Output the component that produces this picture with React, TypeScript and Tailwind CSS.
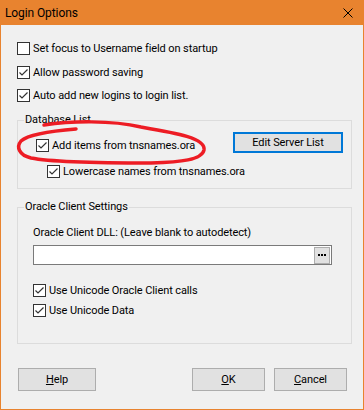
import React from "react";

const font = { fontFamily: 'Roboto, "Noto Sans", "Liberation Sans", sans-serif' };

function Check({ checked }: { checked: boolean }) {
  return (
    <div className="w-[13px] h-[13px] shrink-0 border border-[#333333] bg-white flex items-center justify-center">
      {checked && (
        <svg width="11" height="11" viewBox="0 0 11 11">
          <polyline points="1.5,5.5 4,8 9.5,2.5" fill="none" stroke="#333333" strokeWidth="1.2" />
        </svg>
      )}
    </div>
  );
}

function CheckRow({ checked, label, className = "" }: { checked: boolean; label: string; className?: string }) {
  return (
    <div className={"flex items-center h-[13px] gap-[3px] " + className}>
      <Check checked={checked} />
      <span className="leading-[16px] whitespace-nowrap">{label}</span>
    </div>
  );
}

function Btn({ children, className = "" }: { children: React.ReactNode; className?: string }) {
  return (
    <div className={"h-[23px] shrink-0 border border-[#adadad] bg-[#e1e1e1] flex items-center justify-center leading-[16px] " + className}>
      {children}
    </div>
  );
}

export default function App() {
  return (
    <div className="relative w-[364px] h-[410px] bg-[#f0f0f0] text-[11px] tracking-[-0.1px] text-black border-x border-b border-[#e8832f] flex flex-col" style={font}>
      <div className="h-[25px] -mx-px bg-[#e8832f] flex items-center justify-between pl-[5px] pr-[11px] shrink-0">
        <span className="leading-[16px] text-[12px]">Login Options</span>
        <svg width="10" height="10" viewBox="0 0 10 10">
          <path d="M0.5 0.5 L9.5 9.5 M9.5 0.5 L0.5 9.5" stroke="#000" strokeWidth="1" />
        </svg>
      </div>

      <div className="flex flex-col pl-[16px] pr-[12px]">
        <CheckRow checked={false} label="Set focus to Username field on startup" className="mt-[17px]" />
        <CheckRow checked={true} label="Allow password saving" className="mt-[11px]" />
        <CheckRow checked={true} label="Auto add new logins to login list." className="mt-[10px]" />

        <div className="mt-[18px] w-[335px] border border-[#dcdcdc] flex flex-col">
          <span className="-mt-[9px] ml-[6px] self-start bg-[#f0f0f0] px-px leading-[16px]">Database List</span>
          <div className="flex justify-between pl-[18px] pr-[8px] pb-[10px]">
            <div className="flex flex-col min-w-0">
              <CheckRow checked={true} label="Add items from tnsnames.ora" className="mt-[11px]" />
              <CheckRow checked={true} label="Lowercase names from tnsnames.ora" className="mt-[13px] ml-[11px]" />
            </div>
            <div className="mt-[4px] w-[110px] h-[21px] shrink-0 border-2 border-[#0078d7] bg-[#e1e1e1] flex items-center justify-center leading-[16px] whitespace-nowrap">
              Edit Server List
            </div>
          </div>
        </div>

        <div className="mt-[18px] w-[335px] border border-[#dcdcdc] flex flex-col">
          <span className="-mt-[9px] ml-[6px] self-start bg-[#f0f0f0] px-px leading-[16px]">Oracle Client Settings</span>
          <div className="flex flex-col pl-[15px] pr-[19px] pb-[26px]">
            <span className="mt-[10px] leading-[16px]">Oracle Client DLL: (Leave blank to autodetect)</span>
            <div className="mt-[4px] h-[20px] border border-[#7a7a7a] bg-white flex justify-end items-center pr-px">
              <div className="w-[16px] h-[17px] border border-[#adadad] bg-[#e1e1e1] flex items-center justify-center">
                <svg width="8" height="2" viewBox="0 0 8 2">
                  <rect x="0" y="0" width="2" height="2" fill="#000" />
                  <rect x="3" y="0" width="2" height="2" fill="#000" />
                  <rect x="6" y="0" width="2" height="2" fill="#000" />
                </svg>
              </div>
            </div>
            <CheckRow checked={true} label="Use Unicode Oracle Client calls" className="mt-[19px]" />
            <CheckRow checked={true} label="Use Unicode Data" className="mt-[7px]" />
          </div>
        </div>

        <div className="mt-[24px] flex items-center pl-px">
          <Btn className="w-[78px]">
            <span><span className="underline">H</span>elp</span>
          </Btn>
          <div className="flex-1" />
          <Btn className="w-[73px]">
            <span><span className="underline">O</span>K</span>
          </Btn>
          <Btn className="w-[73px] ml-[9px] mr-[4px]">
            <span><span className="underline">C</span>ancel</span>
          </Btn>
        </div>
      </div>

      <svg className="absolute left-0 top-0 pointer-events-none" width="364" height="410" viewBox="0 0 364 410">
        <path
          d="M 43 125 C 70 121, 110 120, 140 127 C 175 133, 205 138, 203 150 C 201 160, 180 162, 150 163 C 110 163, 50 162, 30 158 C 18 155, 15 147, 20 141 C 28 134, 50 131, 75 129"
          fill="none"
          stroke="#ed1c24"
          strokeWidth="3.5"
          strokeLinecap="round"
        />
      </svg>
    </div>
  );
}
